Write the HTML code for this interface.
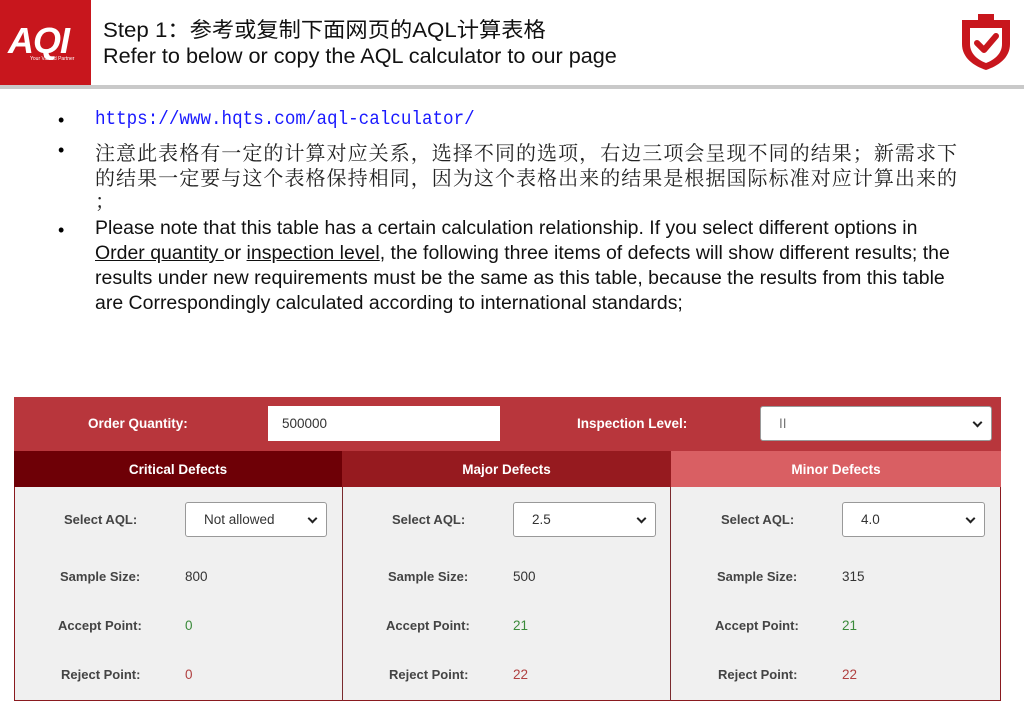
<!DOCTYPE html>
<html><head><meta charset="utf-8"><style>
*{margin:0;padding:0;box-sizing:border-box}
body{width:1024px;height:708px;position:relative;background:#fff;overflow:hidden;font-family:"Liberation Sans","Noto Sans CJK SC",sans-serif}
.a{position:absolute;white-space:nowrap}
.sc{transform-origin:0 0;display:inline-block}
.en{font-size:19px;color:#111}
.hd{font-size:21px;color:#111}
.cn{font-family:"Liberation Serif","Noto Serif CJK SC",serif;font-size:20px;color:#222;letter-spacing:1.05px}
.t{font-size:13.5px;color:#333}
.l{font-size:13px;color:#444;font-weight:bold}
.b{font-weight:bold}
.sel{position:absolute;background:#fff;border:1px solid #999;border-radius:3px;height:35px;font-size:13.5px;color:#333;padding:9px 0 0 18px}
.sel:after{content:"";position:absolute;right:10px;top:12px;width:5px;height:5px;border-right:2px solid #222;border-bottom:2px solid #222;transform:rotate(45deg)}
</style></head><body>
<div class="a" style="left:0;top:0;width:91px;height:85px;background:#c8161d"></div>
<div class="a b" style="left:8px;top:20px;color:#fff;font-size:36px;font-style:italic;letter-spacing:-1px">AQI</div>
<div class="a" style="left:30px;top:56px;color:#fff;font-size:5px">Your Valued Partner</div>
<div class="a" style="left:0;top:85px;width:1024px;height:4px;background:#c9c9c9"></div>
<div class="a hd" style="left:103px;top:14px"><span class="sc" style="transform:scaleX(1.06)">Step 1：参考或复制下面网页的AQL计算表格</span></div>
<div class="a hd" style="left:103px;top:45px"><span class="sc" style="transform:scaleX(1.03)">Refer to below or copy the AQL calculator to our page</span></div>
<svg class="a" style="left:958px;top:10px" width="56" height="62" viewBox="0 0 56 62">
<path d="M4 10 L20 10 L20 4 L36 4 L36 10 L52 10 L52 34 C52 48 40 56 28 60 C16 56 4 48 4 34 Z" fill="#c8161d"/>
<path d="M12 18 L44 18 L44 34 C44 44 36 50 28 53 C20 50 12 44 12 34 Z" fill="#fff"/>
<path d="M19 33 L26 40 L38 26" stroke="#c8161d" stroke-width="6" fill="none" stroke-linecap="round" stroke-linejoin="round"/>
</svg>
<div class="a" style="left:58px;top:110px;font-size:18px">•</div>
<div class="a" style="left:95px;top:108px;font-family:'Liberation Mono',monospace;font-size:19px;color:#1a1aff;text-decoration:underline"><span class="sc" style="transform:scaleX(.925)">https://www.hqts.com/aql-calculator/</span></div>
<div class="a" style="left:58px;top:140px;font-size:18px">•</div>
<div class="a cn" style="left:95px;top:137px">注意此表格有一定的计算对应关系，选择不同的选项，右边三项会呈现不同的结果；新需求下</div>
<div class="a cn" style="left:95px;top:162px">的结果一定要与这个表格保持相同，因为这个表格出来的结果是根据国际标准对应计算出来的</div>
<div class="a cn" style="left:95px;top:185px">；</div>
<div class="a" style="left:58px;top:220px;font-size:18px">•</div>
<div class="a en" style="left:95px;top:218px"><span class="sc" style="transform:scaleX(1.025)">Please note that this table has a certain calculation relationship. If you select different options in</span></div>
<div class="a en" style="left:95px;top:243px"><span class="sc" style="transform:scaleX(1.025)"><u>Order quantity </u>or <u>inspection level</u>, the following three items of defects will show different results; the</span></div>
<div class="a en" style="left:95px;top:268px"><span class="sc" style="transform:scaleX(1.025)">results under new requirements must be the same as this table, because the results from this table</span></div>
<div class="a en" style="left:95px;top:293px"><span class="sc" style="transform:scaleX(1.025)">are Correspondingly calculated according to international standards;</span></div>

<div class="a" style="left:14px;top:397px;width:987px;height:304px;background:#f0f0f0;border:1px solid #8a1a1f"></div>
<div class="a" style="left:14px;top:397px;width:987px;height:54px;background:#b8363c"></div>
<div class="a t b" style="left:88px;top:416px;color:#fff">Order Quantity:</div>
<div class="a" style="left:268px;top:406px;width:232px;height:35px;background:#fff;font-size:13.5px;color:#333;padding:10px 0 0 14px">500000</div>
<div class="a t b" style="left:577px;top:416px;color:#fff">Inspection Level:</div>
<div class="sel" style="left:760px;top:406px;width:232px;color:#777">II</div>
<div class="a" style="left:14px;top:451px;width:328px;height:36px;background:#6e0006"></div>
<div class="a" style="left:342px;top:451px;width:329px;height:36px;background:#961a1f"></div>
<div class="a" style="left:671px;top:451px;width:330px;height:36px;background:#d95f63"></div>
<div class="a" style="left:342px;top:487px;width:1px;height:214px;background:#7a2a2e"></div>
<div class="a" style="left:670px;top:487px;width:1px;height:214px;background:#7a2a2e"></div>
<div class="a t b" style="left:14px;top:462px;width:328px;text-align:center;color:#fff">Critical Defects</div>
<div class="a t b" style="left:342px;top:462px;width:329px;text-align:center;color:#fff">Major Defects</div>
<div class="a t b" style="left:671px;top:462px;width:330px;text-align:center;color:#fff">Minor Defects</div>

<div class="a l" style="left:64px;top:512px">Select AQL:</div>
<div class="sel" style="left:185px;top:502px;width:142px">Not allowed</div>
<div class="a l" style="left:60px;top:569px">Sample Size:</div><div class="a t" style="left:185px;top:569px">800</div>
<div class="a l" style="left:58px;top:618px">Accept Point:</div><div class="a t" style="left:185px;top:618px;color:#3a8a3a">0</div>
<div class="a l" style="left:61px;top:667px">Reject Point:</div><div class="a t" style="left:185px;top:667px;color:#b04040">0</div>

<div class="a l" style="left:392px;top:512px">Select AQL:</div>
<div class="sel" style="left:513px;top:502px;width:143px">2.5</div>
<div class="a l" style="left:388px;top:569px">Sample Size:</div><div class="a t" style="left:513px;top:569px">500</div>
<div class="a l" style="left:386px;top:618px">Accept Point:</div><div class="a t" style="left:513px;top:618px;color:#3a8a3a">21</div>
<div class="a l" style="left:389px;top:667px">Reject Point:</div><div class="a t" style="left:513px;top:667px;color:#b04040">22</div>

<div class="a l" style="left:721px;top:512px">Select AQL:</div>
<div class="sel" style="left:842px;top:502px;width:143px">4.0</div>
<div class="a l" style="left:717px;top:569px">Sample Size:</div><div class="a t" style="left:842px;top:569px">315</div>
<div class="a l" style="left:715px;top:618px">Accept Point:</div><div class="a t" style="left:842px;top:618px;color:#3a8a3a">21</div>
<div class="a l" style="left:718px;top:667px">Reject Point:</div><div class="a t" style="left:842px;top:667px;color:#b04040">22</div>
</body></html>
